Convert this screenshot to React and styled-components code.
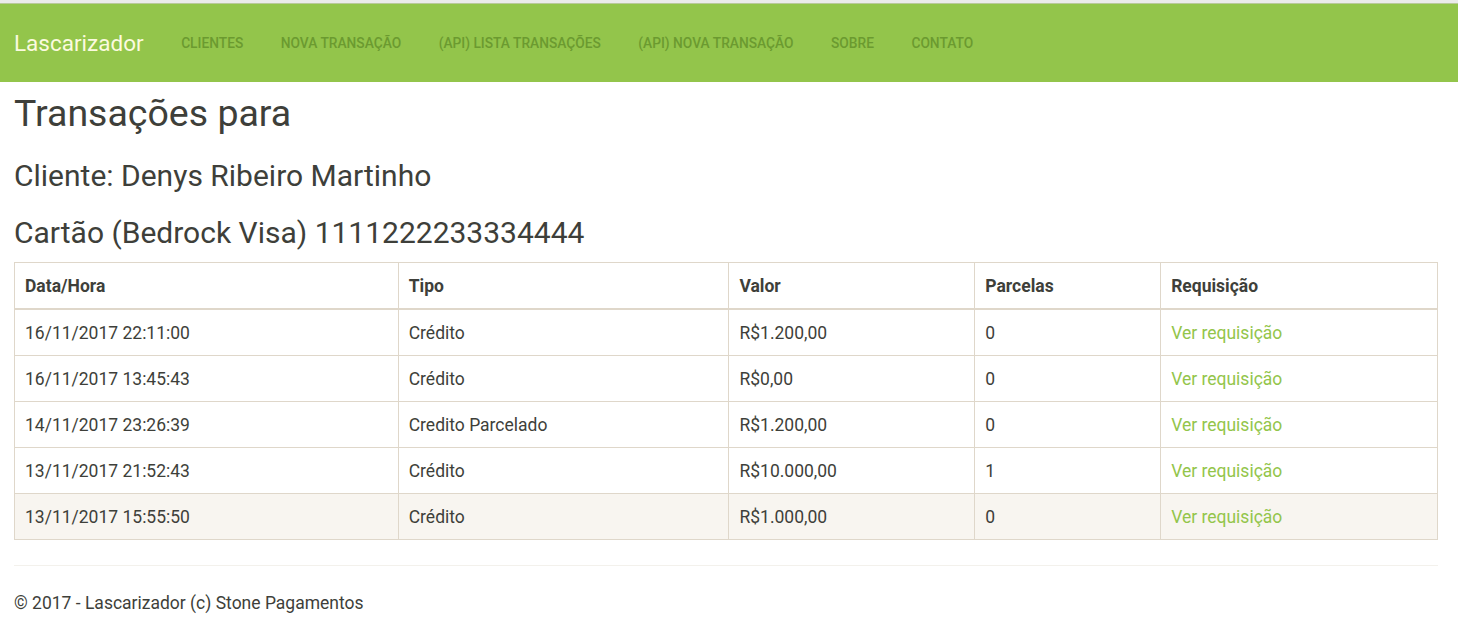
import React from 'react';
import styled, { createGlobalStyle } from 'styled-components';

const GlobalStyle = createGlobalStyle`
  * { box-sizing: border-box; }
  body {
    margin: 0;
    background: #ffffff;
    color: #3e3f3a;
    font-family: Roboto, "Liberation Sans", Arial, sans-serif;
    font-size: 17.5px;
    line-height: 25px;
  }
`;

const TopStrip = styled.div`
  height: 4px;
  background: #ebebea;
  border-bottom: 1px solid #b9c99a;
`;

const Navbar = styled.nav`
  height: 78px;
  background: #93c54b;
  display: flex;
  align-items: center;
  padding: 0 14px;
`;

const Brand = styled.a`
  color: #fbfadf;
  font-size: 22.5px;
  line-height: 25px;
  padding-right: 18.75px;
  text-decoration: none;
`;

const NavList = styled.ul`
  display: flex;
  list-style: none;
  margin: 0;
  padding: 0;
`;

const NavLink = styled.a`
  display: block;
  padding: 0 18.75px;
  color: #6b9a30;
  font-size: 13.75px;
  font-weight: 500;
  text-transform: uppercase;
  text-decoration: none;
  line-height: 25px;
`;

const Container = styled.main`
  padding: 0 20px 0 14px;
`;

const Title = styled.h2`
  font-size: 37.5px;
  font-weight: 400;
  line-height: 1.1;
  margin: 11px 0 12px;
`;

const SubTitle = styled.h3`
  font-size: 30px;
  font-weight: 400;
  line-height: 1.1;
  margin: 24.5px 0 13px;
`;

const Table = styled.table`
  width: 100%;
  border-collapse: collapse;
  border: 1px solid #dfd7ca;
  margin-bottom: 25px;
`;

const Th = styled.th`
  text-align: left;
  font-weight: 700;
  padding: 11px 10px 9px;
  border: 1px solid #dfd7ca;
  border-bottom: 2px solid #dfd7ca;
  width: ${p => p.w}px;
`;

const Row = styled.tr`
  background: ${p => (p.highlight ? '#f8f5f0' : 'transparent')};
`;

const Td = styled.td`
  padding: 11px 10px 9px;
  border: 1px solid #dfd7ca;
`;

const ReqLink = styled.a`
  color: #93c54b;
  text-decoration: none;
`;

const Rule = styled.hr`
  border: 0;
  border-top: 1px solid #f3f1ec;
  margin: 25px 0;
`;

const Footer = styled.footer`
  p { margin: 0 0 12.5px; }
`;

const navItems = [
  'Clientes',
  'Nova Transação',
  '(API) Lista Transações',
  '(API) Nova Transação',
  'Sobre',
  'Contato',
];

const columns = [
  { label: 'Data/Hora', w: 384 },
  { label: 'Tipo', w: 331 },
  { label: 'Valor', w: 246 },
  { label: 'Parcelas', w: 186 },
  { label: 'Requisição', w: 277 },
];

const rows = [
  ['16/11/2017 22:11:00', 'Crédito', 'R$1.200,00', '0'],
  ['16/11/2017 13:45:43', 'Crédito', 'R$0,00', '0'],
  ['14/11/2017 23:26:39', 'Credito Parcelado', 'R$1.200,00', '0'],
  ['13/11/2017 21:52:43', 'Crédito', 'R$10.000,00', '1'],
  ['13/11/2017 15:55:50', 'Crédito', 'R$1.000,00', '0'],
];

export default function App() {
  return (
    <>
      <GlobalStyle />
      <TopStrip />
      <Navbar>
        <Brand href="#">Lascarizador</Brand>
        <NavList>
          {navItems.map(item => (
            <li key={item}>
              <NavLink href="#">{item}</NavLink>
            </li>
          ))}
        </NavList>
      </Navbar>
      <Container>
        <Title>Transações para</Title>
        <SubTitle>Cliente: Denys Ribeiro Martinho</SubTitle>
        <SubTitle>Cartão (Bedrock Visa) 1111222233334444</SubTitle>
        <Table>
          <thead>
            <tr>
              {columns.map(c => (
                <Th key={c.label} w={c.w}>{c.label}</Th>
              ))}
            </tr>
          </thead>
          <tbody>
            {rows.map((r, i) => (
              <Row key={i} highlight={i === rows.length - 1}>
                {r.map((cell, j) => (
                  <Td key={j}>{cell}</Td>
                ))}
                <Td>
                  <ReqLink href="#">Ver requisição</ReqLink>
                </Td>
              </Row>
            ))}
          </tbody>
        </Table>
        <Rule />
        <Footer>
          <p>© 2017 - Lascarizador (c) Stone Pagamentos</p>
        </Footer>
      </Container>
    </>
  );
}
